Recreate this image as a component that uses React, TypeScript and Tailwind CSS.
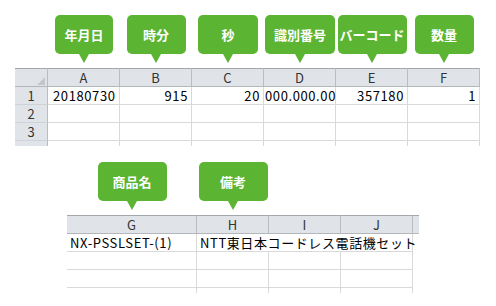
const font = { fontFamily: '"Noto Sans CJK JP", "Noto Sans", sans-serif' };

const Callout = ({ label, width }: { label: string; width: string }) => (
  <div className="flex flex-col items-center">
    <div
      className={`${width} h-[39px] rounded-[5px] bg-[#5bb432] flex items-center justify-center text-white font-bold text-[13px] leading-none`}
    >
      {label}
    </div>
    <div className="w-0 h-0 border-l-[5px] border-r-[5px] border-t-[9px] border-l-transparent border-r-transparent border-t-[#5bb432]" />
  </div>
);

const headCell =
  "h-[19px] bg-[#e0e4e9] border-t border-b border-r border-t-[#a3a7ab] border-b-[#b3b7bb] border-r-[#b9bdc1] flex items-center justify-center text-[13px] text-[#333] leading-none";
const rowHead =
  "h-[18px] bg-[#e0e4e9] border-b border-r border-b-[#cfd3d8] border-r-[#b9bdc1] flex items-center justify-center text-[13px] text-[#333] leading-none";
const cell = "h-[18px] border-b border-r border-[#d9d9d9] flex items-center px-[3px] text-[13px] text-black leading-none tracking-[0.6px] whitespace-nowrap";
const stub = "h-[5px] border-r border-[#d9d9d9]";

const App = () => {
  const cols = ["A", "B", "C", "D", "E", "F"];
  return (
    <div className="w-[496px] h-[306px] bg-white pt-[15px]" style={font}>
      {/* first sheet */}
      <div className="ml-[15px] grid grid-cols-[33px_repeat(6,72px)]">
        <div />
        <Callout label="年月日" width="w-[58px]" />
        <Callout label="時分" width="w-[59px]" />
        <Callout label="秒" width="w-[60px]" />
        <Callout label="識別番号" width="w-[70px]" />
        <Callout label="バーコード" width="w-[69px]" />
        <Callout label="数量" width="w-[59px]" />
      </div>
      <div className="ml-[15px] mt-[5px] grid grid-cols-[33px_repeat(6,72px)]">
        <div className={`${headCell} justify-end items-end pr-[2px] pb-[2px]`}>
          <div className="w-0 h-0 border-l-[8px] border-t-[8px] border-l-transparent border-t-transparent border-b-0 border-r-[8px] border-r-[#c4c8cc] -mb-px" />
        </div>
        {cols.map((c) => (
          <div key={c} className={headCell}>
            {c}
          </div>
        ))}

        <div className={rowHead}>1</div>
        <div className={`${cell} pl-[5px]`}>20180730</div>
        <div className={`${cell} justify-end`}>915</div>
        <div className={`${cell} justify-end`}>20</div>
        <div className={`${cell} px-px`}>000.000.00</div>
        <div className={`${cell} justify-end`}>357180</div>
        <div className={`${cell} justify-end`}>1</div>

        {["2", "3"].map((r) => (
          <div key={r} className="contents">
            <div className={rowHead}>{r}</div>
            {cols.map((c) => (
              <div key={c} className={cell} />
            ))}
          </div>
        ))}

        <div className="h-[5px] bg-[#e0e4e9] border-r border-[#b9bdc1]" />
        {cols.map((c) => (
          <div key={c} className={stub} />
        ))}
      </div>

      {/* second sheet */}
      <div className="ml-[67px] mt-[16px] grid grid-cols-[130px_72px_72px_72px_6px]">
        <Callout label="商品名" width="w-[69px]" />
        <Callout label="備考" width="w-[69px]" />
      </div>
      <div className="ml-[67px] mt-[5px] grid grid-cols-[130px_72px_72px_72px_6px]">
        {["G", "H", "I", "J"].map((c) => (
          <div key={c} className={headCell}>
            {c}
          </div>
        ))}
        <div className={`${headCell} border-r-0`} />

        <div className={`${cell} tracking-[0.2px]`}>NX-PSSLSET-(1)</div>
        <div className={`${cell} col-span-3 overflow-visible`}>NTT東日本コードレス電話機セット</div>
        <div />

        {["2", "3"].map((r) => (
          <div key={r} className="contents">
            <div className={cell} />
            <div className={cell} />
            <div className={cell} />
            <div className={cell} />
            <div />
          </div>
        ))}

        <div className={stub} />
        <div className={stub} />
        <div className={stub} />
        <div className={stub} />
        <div />
      </div>
    </div>
  );
};

export default App;
